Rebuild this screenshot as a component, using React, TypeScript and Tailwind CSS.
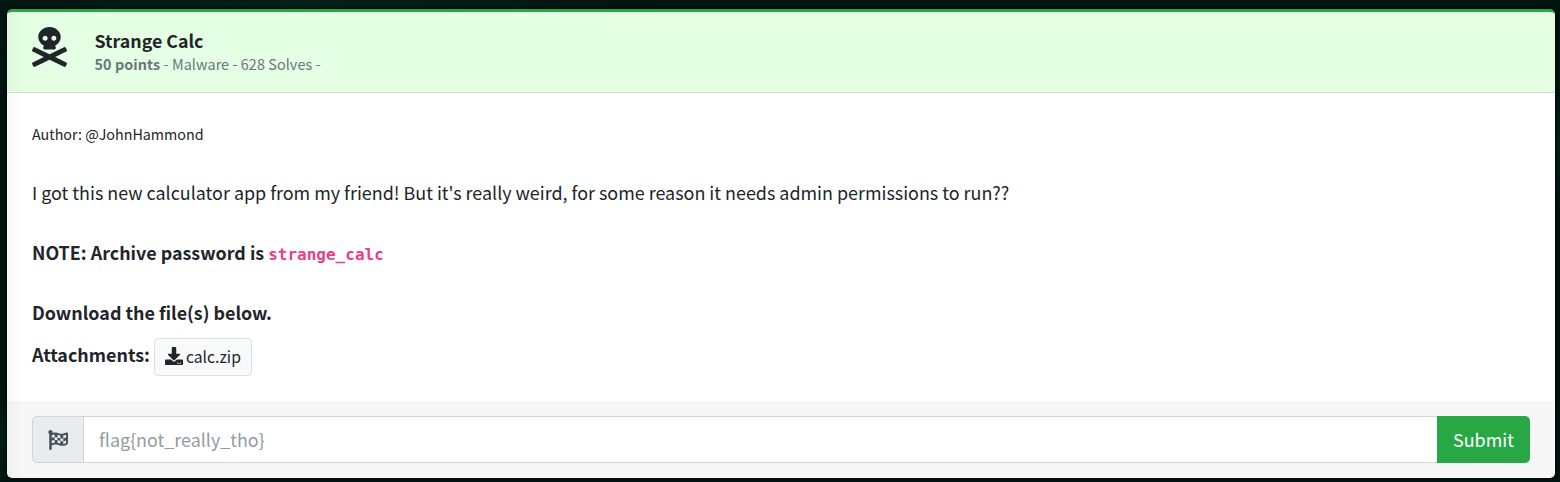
import { FaDownload, FaFlagCheckered, FaSkullCrossbones } from "react-icons/fa";

function ChallengeHeader() {
  return (
    <header className="flex h-[81px] items-start border-b border-[#c9dfc9] bg-[#e4ffe4] bg-linear-to-r from-black/3 to-transparent to-[16px] pl-[25px]">
      <FaSkullCrossbones className="mt-[15px] h-10 w-[35px] shrink-0" />
      <div className="mt-[17px] ml-[27.5px]">
        <h1 className="text-[17.8px] leading-[22px] font-bold">Strange Calc</h1>
        <p className="mt-[1px] text-[14.4px] leading-[24px] tracking-[0.07px] text-[#6c757d]">
          <strong>50 points</strong> - Malware - 628 Solves -
        </p>
      </div>
    </header>
  );
}

function ChallengeBody() {
  return (
    <div className="h-[308px] bg-white bg-linear-to-r from-black/3 to-transparent to-[16px] px-[25px] pt-[26px] text-[17.9px] leading-[30px]">
      <p className="text-[14.3px]">Author: @JohnHammond</p>
      <p className="mt-7 text-[17.91px]">
        I got this new calculator app from my friend! But it's really weird, for some reason it needs admin permissions to run??
      </p>
      <p className="mt-[30px] flex h-[30px] items-baseline gap-[4px] font-bold">
        <span>NOTE: Archive password is</span>
        <code className="font-['DejaVu_Sans_Mono',monospace] text-[16px] leading-none text-[#e83e8c]">strange_calc</code>
      </p>
      <p className="mt-[30px] font-bold">Download the file(s) below.</p>
      <div className="mt-[11px] flex items-start gap-[4px]">
        <span className="leading-8 font-bold">Attachments:</span>
        <button className="flex h-[38px] w-[98px] items-start gap-[3px] rounded-[4px] border border-[#dddfe2] bg-[#f8f9fa] pl-[10px] text-[15.7px]">
          <FaDownload className="mt-[8px] size-[18px] shrink-0" />
          <span className="mt-[3px]">calc.zip</span>
        </button>
      </div>
    </div>
  );
}

function FlagForm() {
  return (
    <form
      className="flex h-[77px] bg-[#f7f7f7] bg-linear-to-r from-black/3 to-transparent to-[16px] px-[25px] pt-[15px] text-[17.9px]"
      onSubmit={(e) => e.preventDefault()}
    >
      <div className="flex h-[47px] w-[52px] items-center justify-center rounded-l-[5px] border border-[#ced4da] bg-[#e9ecef] text-[#495057]">
        <FaFlagCheckered className="size-5" />
      </div>
      <input
        className="h-[47px] min-w-0 flex-1 border-y border-[#ced4da] bg-white pb-[1px] pl-[15px] placeholder:text-[#939ba2]"
        placeholder="flag{not_really_tho}"
      />
      <button className="h-[47px] w-[93px] rounded-r-[5px] bg-[#28a745] pb-[1px] text-white">Submit</button>
    </form>
  );
}

export default function App() {
  return (
    <main className="h-[482px] bg-[#001510] bg-[radial-gradient(ellipse_at_20%_0%,#00201a_0%,transparent_20%),radial-gradient(ellipse_at_95%_30%,#00251f_0%,transparent_12%),radial-gradient(ellipse_at_0%_90%,#02200f_0%,transparent_8%)] pt-[9px] pr-[5px] pl-[7px] font-['Noto_Sans_CJK_SC',sans-serif] text-[#212529]">
      <section className="h-[469px] overflow-hidden rounded-[5px] border-t-[3px] border-[#28a745] shadow-[0_0_4px_#000000]">
        <ChallengeHeader />
        <ChallengeBody />
        <FlagForm />
      </section>
    </main>
  );
}
